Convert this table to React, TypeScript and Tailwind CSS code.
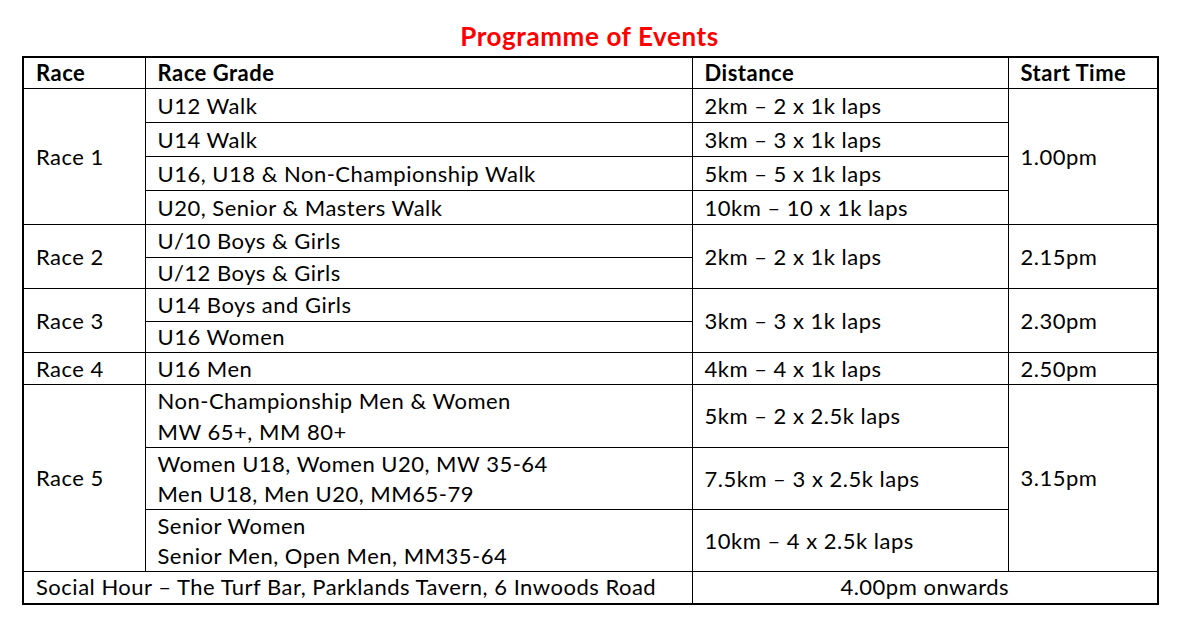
import React from 'react';

const cell = 'border border-black px-[12px] py-0 align-middle';

const App: React.FC = () => {
  return (
    <div className="min-h-screen bg-white pt-[20px] text-black font-['Lato','Open_Sans',sans-serif]">
      <h1 className="text-center text-[26px] leading-[32px] tracking-[0.6px] font-bold text-[#ff0000] ml-[-8px]">
        Programme of Events
      </h1>

      <table className="ml-[22px] mt-[4px] w-[1135px] table-fixed border-collapse border-2 border-black text-[22px] leading-[30px] tracking-[0.5px]">
        <colgroup>
          <col className="w-[122px]" />
          <col className="w-[547px]" />
          <col className="w-[316px]" />
          <col className="w-[150px]" />
        </colgroup>
        <thead>
          <tr className="h-[31px] font-bold text-left">
            <th className={cell}>Race</th>
            <th className={cell}>Race Grade</th>
            <th className={cell}>Distance</th>
            <th className={cell}>Start Time</th>
          </tr>
        </thead>
        <tbody>
          {/* Race 1 */}
          <tr className="h-[34px]">
            <td className={cell} rowSpan={4}>Race 1</td>
            <td className={cell}>U12 Walk</td>
            <td className={cell}>2km – 2 x 1k laps</td>
            <td className={cell} rowSpan={4}>1.00pm</td>
          </tr>
          <tr className="h-[34px]">
            <td className={cell}>U14 Walk</td>
            <td className={cell}>3km – 3 x 1k laps</td>
          </tr>
          <tr className="h-[34px]">
            <td className={cell}>U16, U18 &amp; Non-Championship Walk</td>
            <td className={cell}>5km – 5 x 1k laps</td>
          </tr>
          <tr className="h-[34px]">
            <td className={cell}>U20, Senior &amp; Masters Walk</td>
            <td className={cell}>10km – 10 x 1k laps</td>
          </tr>

          {/* Race 2 */}
          <tr className="h-[33px]">
            <td className={cell} rowSpan={2}>Race 2</td>
            <td className={cell}>U/10 Boys &amp; Girls</td>
            <td className={cell} rowSpan={2}>2km – 2 x 1k laps</td>
            <td className={cell} rowSpan={2}>2.15pm</td>
          </tr>
          <tr className="h-[31px]">
            <td className={cell}>U/12 Boys &amp; Girls</td>
          </tr>

          {/* Race 3 */}
          <tr className="h-[33px]">
            <td className={cell} rowSpan={2}>Race 3</td>
            <td className={cell}>U14 Boys and Girls</td>
            <td className={cell} rowSpan={2}>3km – 3 x 1k laps</td>
            <td className={cell} rowSpan={2}>2.30pm</td>
          </tr>
          <tr className="h-[31px]">
            <td className={cell}>U16 Women</td>
          </tr>

          {/* Race 4 */}
          <tr className="h-[32px]">
            <td className={cell}>Race 4</td>
            <td className={cell}>U16 Men</td>
            <td className={cell}>4km – 4 x 1k laps</td>
            <td className={cell}>2.50pm</td>
          </tr>

          {/* Race 5 */}
          <tr className="h-[63px]">
            <td className={cell} rowSpan={3}>Race 5</td>
            <td className={`${cell} leading-[31px]`}>
              Non-Championship Men &amp; Women
              <br />
              MW 65+, MM 80+
            </td>
            <td className={cell}>5km – 2 x 2.5k laps</td>
            <td className={cell} rowSpan={3}>3.15pm</td>
          </tr>
          <tr className="h-[62px]">
            <td className={`${cell} leading-[30px]`}>
              Women U18, Women U20, MW 35-64
              <br />
              Men U18, Men U20, MM65-79
            </td>
            <td className={cell}>7.5km – 3 x 2.5k laps</td>
          </tr>
          <tr className="h-[62px]">
            <td className={`${cell} leading-[30px]`}>
              Senior Women
              <br />
              Senior Men, Open Men, MM35-64
            </td>
            <td className={cell}>10km – 4 x 2.5k laps</td>
          </tr>

          {/* Social */}
          <tr className="h-[32px]">
            <td className={cell} colSpan={2}>Social Hour – The Turf Bar, Parklands Tavern, 6 Inwoods Road</td>
            <td className={`${cell} text-center`} colSpan={2}>4.00pm onwards</td>
          </tr>
        </tbody>
      </table>
    </div>
  );
};

export default App;
